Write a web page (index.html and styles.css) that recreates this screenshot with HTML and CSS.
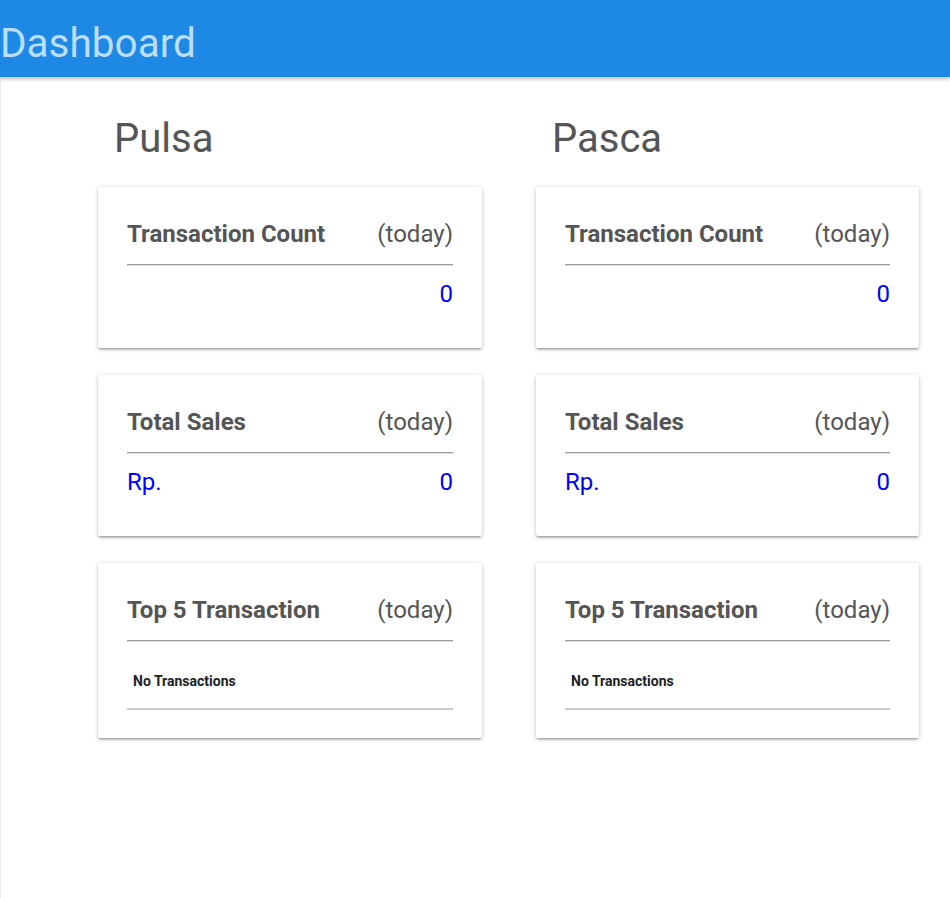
FILE: index.html
```html
<!DOCTYPE html>
<html>
<head>
<meta charset="utf-8">
<link rel="stylesheet" href="styles.css">
</head>
<body>
<header class="topbar"><h1 class="brand">Dashboard</h1></header>
<main class="main">
  <section class="col">
    <h2 class="section-title">Pulsa</h2>
    <div class="card">
      <div class="card-head"><span class="card-title">Transaction Count</span><span class="card-sub">(today)</span></div>
      <hr class="divider">
      <div class="value-row"><span></span><span class="value">0</span></div>
    </div>
    <div class="card">
      <div class="card-head"><span class="card-title">Total Sales</span><span class="card-sub">(today)</span></div>
      <hr class="divider">
      <div class="value-row"><span class="value">Rp.</span><span class="value">0</span></div>
    </div>
    <div class="card">
      <div class="card-head"><span class="card-title">Top 5 Transaction</span><span class="card-sub">(today)</span></div>
      <hr class="divider">
      <table class="tx-table"><tbody><tr><td class="tx-empty">No Transactions</td></tr></tbody></table>
    </div>
  </section>
  <section class="col">
    <h2 class="section-title">Pasca</h2>
    <div class="card">
      <div class="card-head"><span class="card-title">Transaction Count</span><span class="card-sub">(today)</span></div>
      <hr class="divider">
      <div class="value-row"><span></span><span class="value">0</span></div>
    </div>
    <div class="card">
      <div class="card-head"><span class="card-title">Total Sales</span><span class="card-sub">(today)</span></div>
      <hr class="divider">
      <div class="value-row"><span class="value">Rp.</span><span class="value">0</span></div>
    </div>
    <div class="card">
      <div class="card-head"><span class="card-title">Top 5 Transaction</span><span class="card-sub">(today)</span></div>
      <hr class="divider">
      <table class="tx-table"><tbody><tr><td class="tx-empty">No Transactions</td></tr></tbody></table>
    </div>
  </section>
</main>
</body>
</html>
```

FILE: styles.css
```css
html, body {
  margin: 0;
  padding: 0;
  background: #fff;
  font-family: Roboto, "Liberation Sans", Arial, sans-serif;
  color: #555;
}
.topbar {
  height: 77px;
  background: #1e88e5;
  box-shadow: 0 2px 4px rgba(0, 0, 0, 0.28);
  position: relative;
  z-index: 1;
  overflow: hidden;
}
.brand {
  margin: 0;
  padding-top: 20px;
  font-size: 40.5px;
  line-height: 47px;
  font-weight: 400;
  color: #bbdefb;
}
.main {
  display: grid;
  grid-template-columns: 384px 383px;
  column-gap: 54px;
  padding-left: 97px;
  min-height: 821px;
  border-left: 1px solid #eeeeee;
  box-sizing: border-box;
}
.col {
  display: flex;
  flex-direction: column;
}
.section-title {
  margin: 38px 0 25px 16px;
  font-size: 40px;
  line-height: 47px;
  font-weight: 400;
  color: #555;
}
.card {
  background: #fff;
  border-radius: 2px;
  box-shadow: 0 2px 2px rgba(0, 0, 0, 0.14), 0 3px 1px -2px rgba(0, 0, 0, 0.12), 0 1px 5px rgba(0, 0, 0, 0.2);
  padding: 33px 29px 0 29px;
  margin-bottom: 27px;
}
.card-head {
  display: flex;
  justify-content: space-between;
  align-items: baseline;
  font-size: 24px;
  line-height: 28px;
}
.card-title {
  font-weight: 700;
  color: #555;
}
.card-sub {
  font-weight: 400;
  color: #555;
}
.divider {
  margin: 16px 0 0 0;
  border: 0;
  border-top: 1px solid #9a9a9a;
  border-bottom: 1px solid #e0e0e0;
  height: 0;
}
.value-row {
  display: flex;
  justify-content: space-between;
  font-size: 24px;
  line-height: 28px;
  margin-top: 14px;
  padding-bottom: 40px;
}
.value {
  color: #0000ff;
}
.tx-table {
  width: 100%;
  border-collapse: collapse;
  margin-top: 29px;
  margin-bottom: 28px;
}
.tx-empty {
  padding: 2px 6px 19px 6px;
  font-size: 14px;
  font-weight: 700;
  color: #222;
  border-bottom: 2px solid #cccccc;
}
```
